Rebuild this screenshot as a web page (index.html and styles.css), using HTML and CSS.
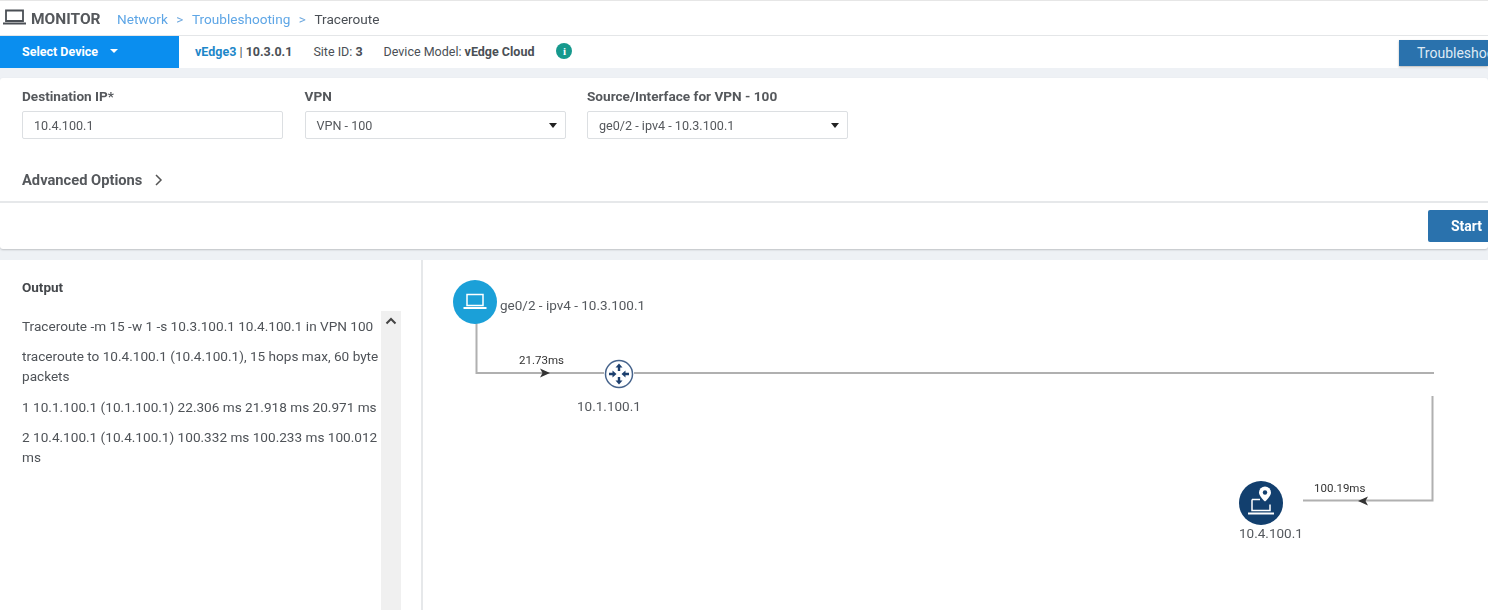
FILE: index.html
```html
<!DOCTYPE html>
<html lang="en">
<head>
<meta charset="utf-8">
<title>Traceroute</title>
<link rel="stylesheet" href="styles.css">
</head>
<body>
<header class="topbar">
  <svg class="monitor-icon" width="23" height="17" viewBox="0 0 23 17"><path d="M3 1.500h17v10.500H3z" fill="none" stroke="#4a4f55" stroke-width="1.800"/><path d="M0 14.500h23" stroke="#4a4f55" stroke-width="2"/></svg>
  <span class="monitor">MONITOR</span>
  <nav class="crumbs">
    <a>Network</a><span class="sep">&gt;</span><a>Troubleshooting</a><span class="sep">&gt;</span><span class="current">Traceroute</span>
  </nav>
</header>
<section class="devicebar">
  <div class="select-device"><span>Select Device</span><i class="caret-white"></i></div>
  <div class="device-info">
    <span class="d-name"><b class="blue">vEdge3</b> | <b>10.3.0.1</b></span>
    <span class="d-site">Site ID: <b>3</b></span>
    <span class="d-model">Device Model: <b>vEdge Cloud</b></span>
    <span class="info">i</span>
  </div>
  <div class="troubleshoot">Troubleshooting</div>
</section>
<section class="card">
  <div class="form">
    <div class="fields">
      <div class="field">
        <label>Destination IP*</label>
        <div class="input">10.4.100.1</div>
      </div>
      <div class="field">
        <label>VPN</label>
        <div class="input">VPN - 100<i class="caret"></i></div>
      </div>
      <div class="field">
        <label>Source/Interface for VPN - 100</label>
        <div class="input">ge0/2 - ipv4 - 10.3.100.1<i class="caret"></i></div>
      </div>
    </div>
    <div class="advanced">
      <span>Advanced Options</span>
      <svg width="10" height="12" viewBox="0 0 10 12"><path d="M2 1l5 5-5 5" fill="none" stroke="#555" stroke-width="1.500"/></svg>
    </div>
  </div>
  <div class="actions"><div class="start">Start</div></div>
</section>
<main class="result">
  <aside class="output">
    <h2>Output</h2>
    <div class="output-body">
      <div class="lines">
        <p>Traceroute -m 15 -w 1 -s 10.3.100.1 10.4.100.1 in VPN 100</p>
        <p>traceroute to 10.4.100.1 (10.4.100.1), 15 hops max, 60 byte packets</p>
        <p>1 10.1.100.1 (10.1.100.1) 22.306 ms 21.918 ms 20.971 ms</p>
        <p>2 10.4.100.1 (10.4.100.1) 100.332 ms 100.233 ms 100.012 ms</p>
      </div>
      <div class="scrollbar">
        <svg width="12" height="8" viewBox="0 0 12 8"><path d="M1.500 6.500L6 2l4.500 4.500" fill="none" stroke="#444" stroke-width="2"/></svg>
      </div>
    </div>
  </aside>
  <div class="diagram">
    <svg class="links" width="1066" height="350" viewBox="0 0 1066 350">
      <g fill="none" stroke="#b0b0b0" stroke-width="2">
        <path d="M53.500 40V113H181"/>
        <path d="M211 113H1011"/>
        <path d="M1009.500 136V240.500H880"/>
      </g>
      <path d="M117 108.500l10 4.500-10 4.500 2.500-4.500z" fill="#333"/>
      <path d="M945 236.500l-10 4.500 10 4.500-2.500-4.500z" fill="#333"/>
    </svg>
    <div class="node src">
      <svg width="44" height="44" viewBox="0 0 44 44"><circle cx="22" cy="22" r="22" fill="#1ba0d8"/><path d="M14 14.500h16v11H14z" fill="none" stroke="#fff" stroke-width="1.500"/><path d="M10.500 28h23" stroke="#fff" stroke-width="2"/></svg>
    </div>
    <span class="lbl src-lbl">ge0/2 - ipv4 - 10.3.100.1</span>
    <span class="ms ms1">21.73ms</span>
    <div class="node router">
      <svg width="30" height="30" viewBox="0 0 30 30"><circle cx="15" cy="15" r="13.500" fill="#fff" stroke="#47648c" stroke-width="1.500"/><g fill="#1c3f6e"><path d="M15 4.500l3.500 4h-2.300v3.500h-2.400V8.500H11.500z"/><path d="M15 25.500l3.500-4h-2.300V18h-2.400v3.500H11.500z"/><path d="M12.500 15l-4-3.500v2.300H5v2.400h3.500v2.300z"/><path d="M17.500 15l4-3.500v2.300H25v2.400h-3.500v2.300z"/></g></svg>
    </div>
    <span class="lbl r-lbl">10.1.100.1</span>
    <span class="ms ms2">100.19ms</span>
    <div class="node dest">
      <svg width="44" height="44" viewBox="0 0 44 44"><circle cx="22" cy="22" r="22" fill="#123f6e"/><path d="M13 18.500h8M13 18.500v11h18v-6" fill="none" stroke="#fff" stroke-width="1.500"/><path d="M9 32.500h26" stroke="#fff" stroke-width="2"/><path d="M26 5.500a6 6 0 0 1 6 6c0 4-6 9-6 9s-6-5-6-9a6 6 0 0 1 6-6z" fill="#fff"/><circle cx="26" cy="11.500" r="2.200" fill="#123f6e"/></svg>
    </div>
    <span class="lbl d-lbl">10.4.100.1</span>
  </div>
</main>
</body>
</html>
```
FILE: styles.css
```css
* { box-sizing: border-box; }
html, body { margin: 0; height: 610px; overflow: hidden; }
body {
  width: 1488px;
  background: #eef1f5;
  font-family: Roboto, "Liberation Sans", sans-serif;
  font-size: 13.500px;
  color: #4a4f55;
  filter: blur(0.35px);
}
b { font-weight: 700; }
.blue { color: #1c87c9; }

.topbar {
  height: 36px;
  background: #fff;
  border-top: 1px solid #e6e6e6;
  border-bottom: 1px solid #e4e6e8;
  display: flex;
  align-items: center;
  padding: 2px 0 0 3px;
}
.monitor-icon { flex: none; margin-top: -4px; }
.monitor { margin-left: 5px; font-weight: 700; font-size: 15.500px; color: #55585c; width: 86px; }
.crumbs { display: flex; font-size: 13.600px; align-items: center; }
.crumbs a { color: #5ea6e6; }
.sep { color: #6ea8de; margin: 0 8.500px; }
.current { color: #4a4f55; }

.devicebar {
  height: 32px;
  background: #fff;
  display: flex;
  align-items: stretch;
  position: relative;
  font-size: 12.500px;
}
.select-device {
  width: 179px;
  background: #0a8eef;
  color: #fff;
  font-weight: 700;
  display: flex;
  align-items: center;
  padding: 0 0 2px 22px;
}
.caret-white {
  margin-left: 12px;
  border-left: 4px solid transparent;
  border-right: 4px solid transparent;
  border-top: 4px solid #fff;
}
.device-info { display: flex; align-items: center; padding: 0 0 2px 16px; }
.d-site { margin-left: 21px; }
.d-model { margin-left: 21px; }
.info {
  margin-left: 22px;
  width: 16px;
  height: 16px;
  border-radius: 50%;
  background: #16998d;
  color: #fff;
  font: 700 11px/16px "Liberation Serif", serif;
  text-align: center;
}
.troubleshoot {
  position: absolute;
  left: 1399px;
  top: 4px;
  width: 89px;
  height: 26px;
  background: #2a72ad;
  color: #dfeaf4;
  font-size: 14px;
  line-height: 26px;
  padding-left: 18px;
  box-shadow: 0 1px 2px rgba(0,0,0,.3);
  white-space: nowrap;
  overflow: hidden;
}

.card {
  margin-top: 10px;
  height: 171px;
  background: #fff;
  border-radius: 3px;
  box-shadow: 0 1px 2px rgba(0,0,0,.2);
  display: flex;
  flex-direction: column;
}
.form {
  height: 125px;
  padding: 9px 22px 0;
  border-bottom: 2px solid #e6e8ea;
}
.fields { display: flex; gap: 21.500px; }
.field { width: 261px; }
.field label { display: block; font-weight: 700; font-size: 13.600px; line-height: 18px; color: #55585c; margin-bottom: 6px; }
.input {
  height: 28px;
  border: 1px solid #dcdfe2;
  border-radius: 2px;
  padding: 0 8px 0 11px;
  font-size: 12.600px;
  color: #55585c;
  display: flex;
  justify-content: space-between;
  align-items: center;
}
.caret {
  border-left: 4.500px solid transparent;
  border-right: 4.500px solid transparent;
  border-top: 5px solid #222;
}
.advanced {
  margin-top: 32px;
  display: flex;
  align-items: center;
  gap: 12px;
  font-weight: 700;
  font-size: 14.700px;
  color: #55585c;
}
.actions { flex: 1; display: flex; padding: 7px 0 0 1428px; }
.start {
  width: 60px;
  height: 32px;
  background: #2a72ad;
  color: #fff;
  font-weight: 700;
  font-size: 14px;
  line-height: 32px;
  padding-left: 23px;
  border-radius: 2px 0 0 2px;
}

.result {
  margin-top: 11px;
  height: 350px;
  background: #fff;
  display: flex;
}
.output {
  width: 423px;
  flex: none;
  border-right: 2px solid #e6e8ea;
  padding: 18px 20px 0 22px;
  display: flex;
  flex-direction: column;
}
.output h2 { margin: 0; font-size: 13.500px; font-weight: 700; line-height: 18px; color: #44474b; }
.output-body { display: flex; margin-top: 15px; flex: 1; }
.lines { width: 359px; flex: none; font-size: 13.600px; line-height: 20px; color: #4f5358; padding-top: 5px; }
.lines p { margin: 0 0 10.300px; }
.scrollbar {
  width: 20px;
  background: #f0f0f0;
  display: flex;
  justify-content: center;
  align-items: flex-start;
  padding-top: 6px;
}

.diagram { position: relative; flex: 1; }
.links { position: absolute; left: 0; top: 0; }
.node { position: absolute; line-height: 0; }
.src { left: 30px; top: 20px; }
.router { left: 181px; top: 99px; }
.dest { left: 816px; top: 221px; }
.lbl { position: absolute; line-height: 18px; color: #55595e; white-space: nowrap; }
.src-lbl { left: 77px; top: 36px; }
.r-lbl { left: 154px; top: 137px; }
.d-lbl { left: 816px; top: 264px; }
.ms { position: absolute; font-size: 11.500px; line-height: 14px; color: #333; white-space: nowrap; }
.ms1 { left: 96px; top: 93px; }
.ms2 { left: 891px; top: 221px; }
```
